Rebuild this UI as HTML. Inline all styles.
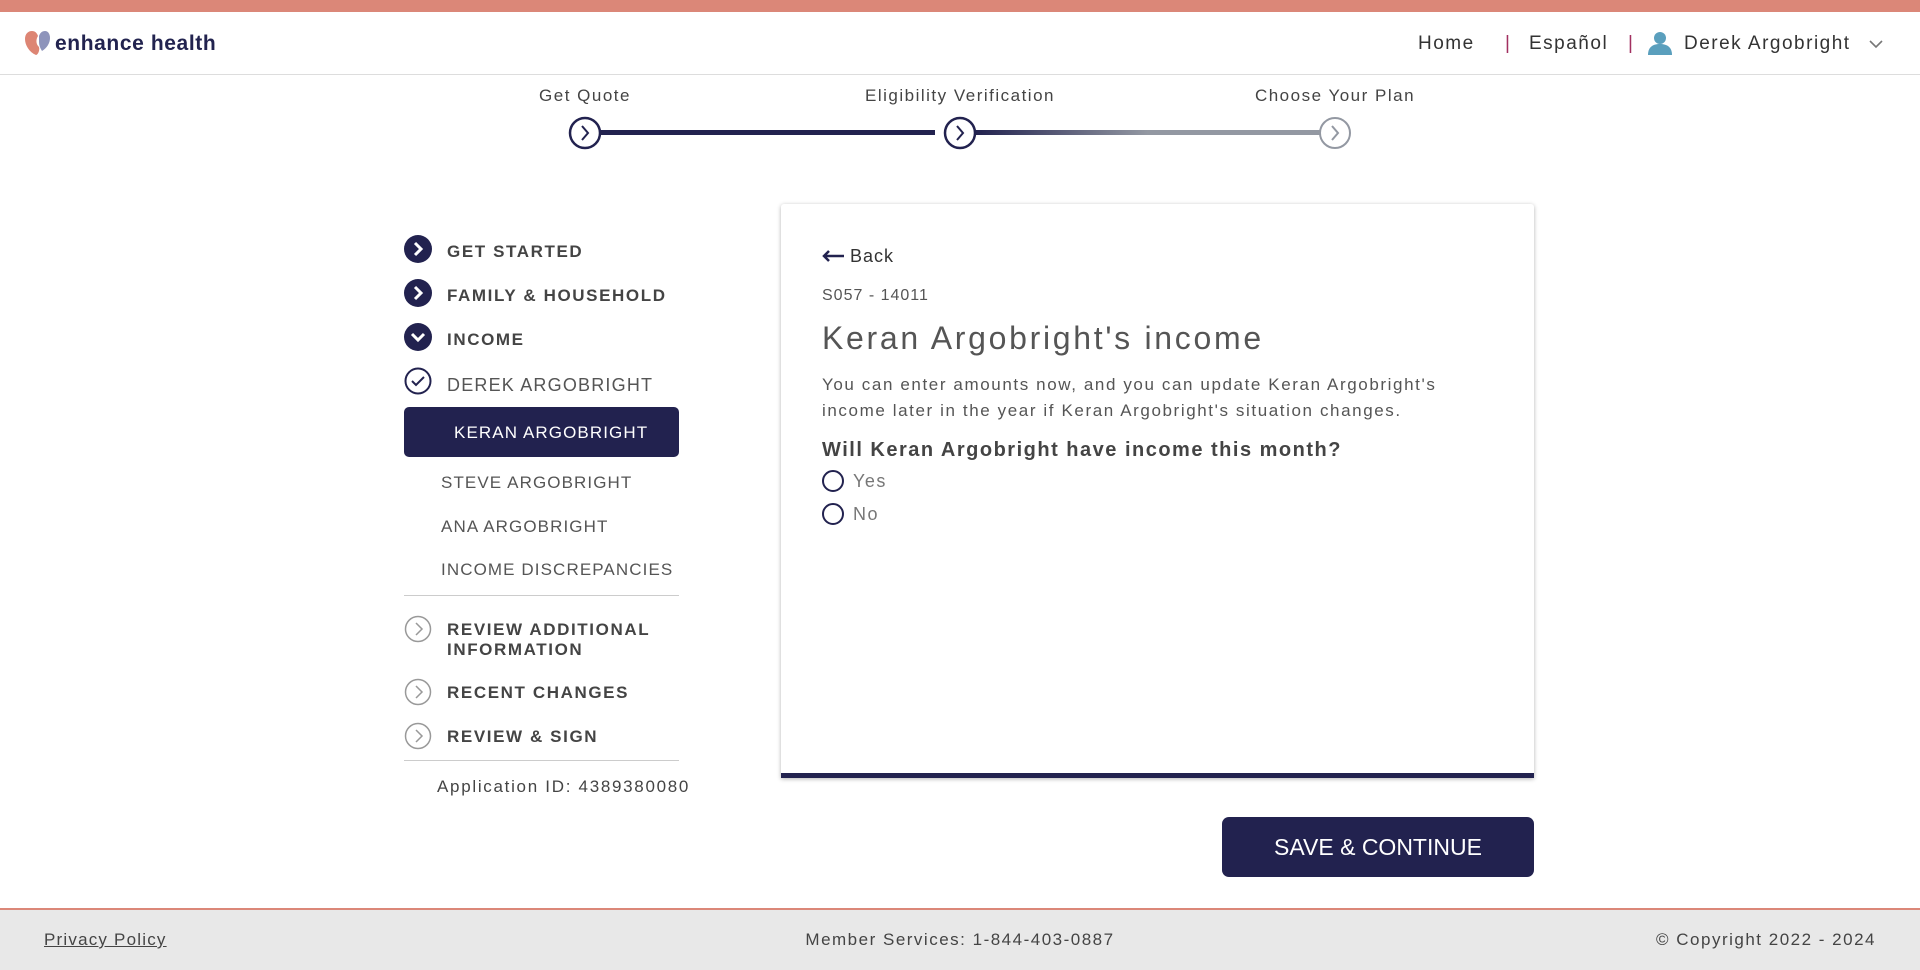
<!DOCTYPE html>
<html><head><meta charset="utf-8"><style>
*{margin:0;padding:0;box-sizing:border-box}
body{width:1920px;height:970px;position:relative;background:#fff;font-family:"Liberation Sans",sans-serif;color:#444;overflow:hidden;letter-spacing:1.5px}
.a{position:absolute;white-space:nowrap}
.c{line-height:30px;height:30px}
.side{font-size:17px;font-weight:bold;color:#444;letter-spacing:1.6px}
.sub{font-size:17px;color:#555;letter-spacing:1.1px}
</style></head><body>
<div class="a" style="left:0;top:0;width:1920px;height:12px;background:#db8778"></div>
<div class="a" style="left:0;top:74px;width:1920px;height:1px;background:#ddd"></div>
<svg class="a" style="left:24px;top:30px" width="30" height="26" viewBox="0 0 30 26"><path d="M12 25C5 22 1 15 1 9 1 4 4 1 8 1c3 0 5 2 6 5 0 0-4 6 1 11 1 3-1 8-3 8z" fill="#dd8574"/><path d="M15 6c1-3 3-5 6-5 3 0 5 3 5 7 0 5-3 10-8 13-2-3-3-6-3-9z" fill="#8e94bb"/></svg>
<div class="a c" style="left:55px;top:29px;font-size:21px;font-weight:bold;color:#22234f;letter-spacing:.6px">enhance health</div>
<div class="a c" style="left:1418px;top:29px;font-size:19px;color:#333">Home</div>
<div class="a c" style="left:1505px;top:29px;font-size:19px;color:#a23060">|</div>
<div class="a c" style="left:1529px;top:29px;font-size:19px;color:#333">Español</div>
<div class="a c" style="left:1628px;top:29px;font-size:19px;color:#a23060">|</div>
<svg class="a" style="left:1647px;top:31px" width="26" height="24" viewBox="0 0 26 24"><circle cx="13" cy="7" r="6" fill="#5a9fbd"/><path d="M1 24c0-8 5-11 12-11s12 3 12 11z" fill="#5a9fbd"/></svg>
<div class="a c" style="left:1684px;top:29px;font-size:19px;color:#333">Derek Argobright</div>
<svg class="a" style="left:1869px;top:39px" width="14" height="10"><path d="M1 2l6 6 6-6" stroke="#777" stroke-width="1.6" fill="none"/></svg>

<div class="a c" style="left:485px;top:81px;width:200px;text-align:center;font-size:17px;color:#444">Get Quote</div>
<div class="a c" style="left:810px;top:81px;width:300px;text-align:center;font-size:17px;color:#444">Eligibility Verification</div>
<div class="a c" style="left:1185px;top:81px;width:300px;text-align:center;font-size:17px;color:#444">Choose Your Plan</div>
<svg class="a" style="left:560px;top:114px" width="800" height="38"><defs><linearGradient id="g" x1="0" x2="1"><stop offset="0" stop-color="#22224f"/><stop offset=".5" stop-color="#9398a2"/><stop offset="1" stop-color="#9398a2"/></linearGradient></defs>
<rect x="25" y="16" width="350" height="5" fill="#22224f"/><rect x="415" y="16" width="345" height="5" fill="url(#g)"/>
<circle cx="25" cy="19" r="15" fill="#fff" stroke="#22224f" stroke-width="2.5"/><path d="M22 12l6 7-6 7" stroke="#22224f" stroke-width="2" fill="none"/>
<circle cx="400" cy="19" r="15" fill="#fff" stroke="#22224f" stroke-width="2.5"/><path d="M397 12l6 7-6 7" stroke="#22224f" stroke-width="2" fill="none"/>
<circle cx="775" cy="19" r="15" fill="#fff" stroke="#9398a2" stroke-width="2"/><path d="M772 12l6 7-6 7" stroke="#9398a2" stroke-width="2" fill="none"/></svg>

<svg class="a" style="left:404px;top:235px" width="30" height="160">
<circle cx="14" cy="14" r="14" fill="#22224f"/><path d="M11 8l6 6-6 6" stroke="#fff" stroke-width="3" fill="none"/>
<circle cx="14" cy="58" r="14" fill="#22224f"/><path d="M11 52l6 6-6 6" stroke="#fff" stroke-width="3" fill="none"/>
<circle cx="14" cy="102" r="14" fill="#22224f"/><path d="M8 99l6 6 6-6" stroke="#fff" stroke-width="3" fill="none"/>
<circle cx="14" cy="146" r="12.5" fill="none" stroke="#22224f" stroke-width="2"/><path d="M8 146l4 4 8-8" stroke="#22224f" stroke-width="2" fill="none"/></svg>
<div class="a c side" style="left:447px;top:237px">GET STARTED</div>
<div class="a c side" style="left:447px;top:281px">FAMILY &amp; HOUSEHOLD</div>
<div class="a c side" style="left:447px;top:325px">INCOME</div>
<div class="a c" style="left:447px;top:370px;font-size:18px;color:#555;letter-spacing:1.2px">DEREK ARGOBRIGHT</div>
<div class="a" style="left:404px;top:407px;width:275px;height:50px;background:#22224f;border-radius:5px"></div>
<div class="a c" style="left:454px;top:418px;font-size:17px;color:#fff;letter-spacing:1.1px">KERAN ARGOBRIGHT</div>
<div class="a c sub" style="left:441px;top:468px">STEVE ARGOBRIGHT</div>
<div class="a c sub" style="left:441px;top:512px">ANA ARGOBRIGHT</div>
<div class="a c sub" style="left:441px;top:555px">INCOME DISCREPANCIES</div>
<div class="a" style="left:404px;top:595px;width:275px;height:1px;background:#ccc"></div>
<svg class="a" style="left:404px;top:615px" width="30" height="140">
<circle cx="14" cy="14" r="12.5" fill="none" stroke="#999" stroke-width="1.5"/><path d="M12 8l6 6-6 6" stroke="#999" stroke-width="1.5" fill="none"/>
<circle cx="14" cy="77" r="12.5" fill="none" stroke="#999" stroke-width="1.5"/><path d="M12 71l6 6-6 6" stroke="#999" stroke-width="1.5" fill="none"/>
<circle cx="14" cy="121" r="12.5" fill="none" stroke="#999" stroke-width="1.5"/><path d="M12 115l6 6-6 6" stroke="#999" stroke-width="1.5" fill="none"/></svg>
<div class="a side" style="left:447px;top:620px;line-height:20px">REVIEW ADDITIONAL<br>INFORMATION</div>
<div class="a c side" style="left:447px;top:678px">RECENT CHANGES</div>
<div class="a c side" style="left:447px;top:722px">REVIEW &amp; SIGN</div>
<div class="a" style="left:404px;top:760px;width:275px;height:1px;background:#ccc"></div>
<div class="a c" style="left:437px;top:772px;font-size:17px;color:#444;letter-spacing:1.7px">Application ID: 4389380080</div>

<div class="a" style="left:781px;top:204px;width:753px;height:574px;background:#fff;box-shadow:0 1px 4px rgba(0,0,0,.3);border-radius:3px 3px 0 0;border-bottom:5px solid #22224f"></div>
<svg class="a" style="left:822px;top:250px" width="22" height="12"><path d="M2 6h20M7 1L2 6l5 5" stroke="#22224f" stroke-width="2.5" fill="none"/></svg>
<div class="a c" style="left:850px;top:241px;font-size:18px;color:#333;letter-spacing:1px">Back</div>
<div class="a c" style="left:822px;top:281px;font-size:16px;color:#555;letter-spacing:1px">S057 - 14011</div>
<div class="a" style="left:822px;top:318px;line-height:40px;font-size:32px;color:#555;letter-spacing:2.7px">Keran Argobright's income</div>
<div class="a" style="left:822px;top:372px;line-height:26px;font-size:17px;color:#555;letter-spacing:1.6px">You can enter amounts now, and you can update Keran Argobright's<br>income later in the year if Keran Argobright's situation changes.</div>
<div class="a c" style="left:822px;top:435px;font-size:20px;font-weight:bold;color:#444;letter-spacing:1.5px">Will Keran Argobright have income this month?</div>
<div class="a" style="left:822px;top:470px;width:22px;height:22px;border:2px solid #22224f;border-radius:50%"></div>
<div class="a c" style="left:853px;top:466px;font-size:18px;color:#777">Yes</div>
<div class="a" style="left:822px;top:503px;width:22px;height:22px;border:2px solid #22224f;border-radius:50%"></div>
<div class="a c" style="left:853px;top:499px;font-size:18px;color:#777">No</div>

<div class="a" style="left:1222px;top:817px;width:312px;height:60px;background:#22224f;border-radius:7px;color:#fff;font-size:23px;line-height:60px;text-align:center;letter-spacing:0">SAVE &amp; CONTINUE</div>

<div class="a" style="left:0;top:908px;width:1920px;height:62px;background:#e8e8e8;border-top:2px solid #db8778"></div>
<div class="a c" style="left:44px;top:925px;font-size:17px;color:#444;text-decoration:underline;letter-spacing:1.2px">Privacy Policy</div>
<div class="a c" style="left:710px;top:925px;width:500px;text-align:center;font-size:17px;color:#444">Member Services: 1-844-403-0887</div>
<div class="a c" style="right:44px;top:925px;font-size:17px;color:#444">© Copyright 2022 - 2024</div>
</body></html>
